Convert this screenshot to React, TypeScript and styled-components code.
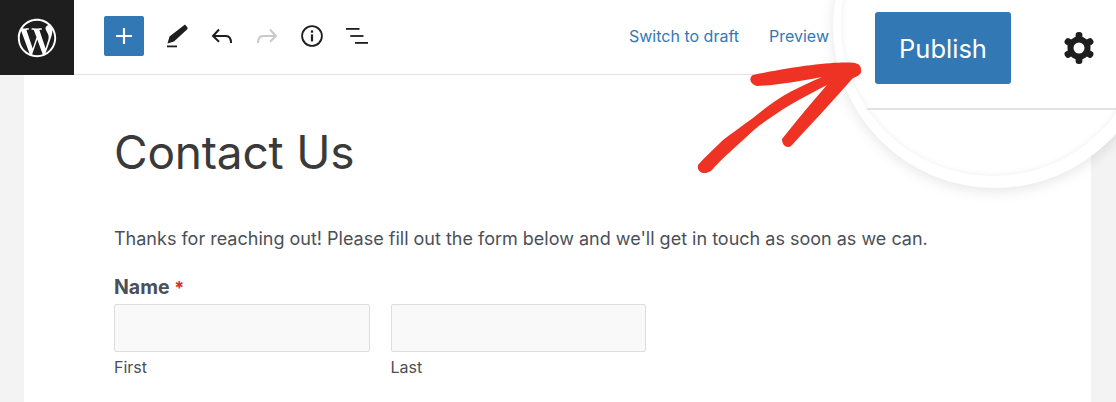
import React from "react";
import styled, { createGlobalStyle } from "styled-components";

const GlobalStyle = createGlobalStyle`
  html, body {
    margin: 0;
    padding: 0;
    background: #ffffff;
  }
  body {
    font-family: Inter, "Liberation Sans", sans-serif;
    overflow: hidden;
  }
`;

const WordPressLogo = () => (
  <svg width="46" height="46" viewBox="0 0 24 24" fill="#ffffff">
    <path d="M12.158 12.786l-2.698 7.84c.806.236 1.657.365 2.54.365 1.047 0 2.051-.181 2.986-.51-.024-.038-.046-.079-.065-.124l-2.763-7.571zM3.009 12c0 3.559 2.068 6.634 5.067 8.092L3.788 8.341C3.289 9.459 3.009 10.696 3.009 12zm15.06-.454c0-1.112-.399-1.881-.741-2.48-.456-.741-.883-1.368-.883-2.109 0-.826.627-1.596 1.51-1.596.04 0 .078.005.116.007C16.472 3.904 14.34 3.009 12 3.009c-3.141 0-5.904 1.612-7.512 4.052.211.007.41.011.579.011.94 0 2.396-.114 2.396-.114.484-.028.541.684.057.741 0 0-.487.057-1.029.085l3.274 9.739 1.968-5.901-1.401-3.838c-.484-.028-.943-.085-.943-.085-.485-.029-.428-.769.057-.741 0 0 1.484.114 2.368.114.94 0 2.397-.114 2.397-.114.485-.028.542.684.057.741 0 0-.488.057-1.029.085l3.249 9.665.897-2.996c.456-1.169.684-2.137.684-2.907zm1.82-3.86c.039.286.06.593.06.924 0 .912-.171 1.938-.684 3.22l-2.746 7.94C19.194 18.229 20.991 15.325 20.991 12c0-1.565-.4-3.038-1.102-4.314zM12 22C6.486 22 2 17.514 2 12S6.486 2 12 2s10 4.486 10 10-4.486 10-10 10z" />
  </svg>
);

const Plus = () => (
  <svg width="32" height="32" viewBox="0 0 24 24" fill="#ffffff">
    <path d="M18 11.2h-5.2V6h-1.6v5.2H6v1.6h5.2V18h1.6v-5.2H18z" />
  </svg>
);

const Pencil = () => (
  <svg width="24" height="24" viewBox="0 0 24 24" fill="#1e1e1e">
    <path d="M20 .5l2.5 3q.6 1-.5 2L9 17.5l-6.5 2 2-7z" />
    <rect x="2" y="21.5" width="10" height="1.8" />
  </svg>
);

const Undo = () => (
  <svg width="24" height="24" viewBox="0 0 24 24" fill="none" stroke="#1e1e1e" strokeWidth="2">
    <path d="M9 5.5L3 12l6 5.8M3.5 12H16c3.5 0 5 2 5 7" />
  </svg>
);

const Redo = () => (
  <svg width="24" height="24" viewBox="0 0 24 24" fill="none" stroke="#c9c9c9" strokeWidth="2">
    <path d="M15 5.5l6 6.5-6 5.8M20.5 12H8c-3.5 0-5 2-5 7" />
  </svg>
);

const Info = () => (
  <svg width="24" height="24" viewBox="0 0 24 24" fill="#1e1e1e">
    <path d="M12 1.2a10.8 10.8 0 1 0 0 21.6 10.8 10.8 0 0 0 0-21.6zm0 19.8a9 9 0 1 1 0-18 9 9 0 0 1 0 18z" />
    <rect x="10.9" y="10.4" width="2.2" height="7" />
    <rect x="10.9" y="6.4" width="2.2" height="2.3" />
  </svg>
);

const ListView = () => (
  <svg width="24" height="24" viewBox="0 0 24 24" fill="#1e1e1e">
    <rect x="1" y="4" width="13.5" height="1.8" />
    <rect x="5.3" y="11.1" width="13.2" height="1.8" />
    <rect x="10" y="18" width="13" height="1.8" />
  </svg>
);

const Gear = () => (
  <svg width="32" height="32" viewBox="0 0 32 32" fill="#1e1e1e">
    <circle cx="16" cy="16" r="8.5" fill="none" stroke="#1e1e1e" strokeWidth="6" />
    {[0, 60, 120, 180, 240, 300].map((angle) => (
      <rect key={angle} x="12.6" y="0" width="6.8" height="8" rx="3" transform={`rotate(${angle} 16 16)`} />
    ))}
  </svg>
);

const Arrow = () => (
  <ArrowSvg viewBox="0 0 180 130" width="180" height="130">
    <path
      fill="#ee3224"
      d="M165 13 C150 11 110 15 63 25 C59 27 59 34 67 36 C90 35 110 31 132 27 C120 32 110 37 100 42 C85 50 73 60 63 68 C52 76 42 83 33 90 C25 98 15 107 8 115 C7 119 9 122 13 123 C16 123.5 19 122 21 121 C27 114 33 108 40 102 C50 93 60 83 70 75 C80 68 90 61 100 55 C112 48 125 41 137 35 C122 52 107 70 92 89 C92 93 94 97 98 97 C100 97 101 96 102 95 C122 73 143 51 163 28 C168 26 172 24 171 20 C171 16 169 14 165 13 Z"
    />
  </ArrowSvg>
);

export default function App() {
  return (
    <Page>
      <GlobalStyle />
      <TopBar>
        <LogoTile>
          <WordPressLogo />
        </LogoTile>
        <Tools>
          <AddButton>
            <Plus />
          </AddButton>
          <ToolIcon>
            <Pencil />
          </ToolIcon>
          <ToolIcon>
            <Undo />
          </ToolIcon>
          <ToolIcon>
            <Redo />
          </ToolIcon>
          <ToolIcon>
            <Info />
          </ToolIcon>
          <ToolIcon>
            <ListView />
          </ToolIcon>
        </Tools>
        <Links>
          <TopLink>Switch to draft</TopLink>
          <TopLink>Preview</TopLink>
        </Links>
      </TopBar>
      <Canvas>
        <Sheet>
          <Title>Contact Us</Title>
          <Intro>
            Thanks for reaching out! Please fill out the form below and we'll get in touch as soon as we can.
          </Intro>
          <FieldLabel>
            Name <Required>*</Required>
          </FieldLabel>
          <NameRow>
            <NameColumn>
              <NameInput />
              <SubLabel>First</SubLabel>
            </NameColumn>
            <NameColumn>
              <NameInput />
              <SubLabel>Last</SubLabel>
            </NameColumn>
          </NameRow>
        </Sheet>
      </Canvas>
      <Magnifier>
        <Lens>
          <MagnifiedBar>
            <PublishButton>Publish</PublishButton>
            <Gear />
          </MagnifiedBar>
        </Lens>
      </Magnifier>
      <Arrow />
    </Page>
  );
}

const Page = styled.div`
  position: relative;
  width: 1116px;
  height: 402px;
  overflow: hidden;
`;

const TopBar = styled.header`
  display: flex;
  align-items: center;
  height: 74px;
  border-bottom: 1px solid #e2e2e2;
  background: #ffffff;
`;

const LogoTile = styled.div`
  display: flex;
  align-items: center;
  justify-content: center;
  width: 74px;
  height: 75px;
  margin-bottom: -1px;
  background: #1e1e1e;
`;

const Tools = styled.div`
  display: flex;
  align-items: center;
  margin-left: 30px;
  margin-bottom: 2px;
`;

const AddButton = styled.div`
  display: flex;
  align-items: center;
  justify-content: center;
  width: 40px;
  height: 40px;
  margin-right: 10px;
  border-radius: 2px;
  background: #3278b5;
`;

const ToolIcon = styled.div`
  display: flex;
  align-items: center;
  justify-content: center;
  width: 45px;
  height: 40px;
`;

const Links = styled.nav`
  display: flex;
  gap: 30px;
  margin-left: auto;
  margin-right: 287px;
  margin-bottom: 2px;
`;

const TopLink = styled.span`
  font-size: 16px;
  color: #3278b5;
`;

const Canvas = styled.main`
  display: flex;
  height: 327px;
  padding: 0 25px 0 24px;
  background: #f3f3f3;
`;

const Sheet = styled.section`
  flex: 1;
  padding: 49px 90px 0;
  background: #ffffff;
  color: #4b4f58;
`;

const Title = styled.h1`
  margin: 0;
  font-size: 46px;
  font-weight: 400;
  line-height: 56px;
  letter-spacing: -0.2px;
  color: #3a3a3a;
`;

const Intro = styled.p`
  margin: 47px 0 0;
  font-size: 18px;
  line-height: 24px;
`;

const FieldLabel = styled.div`
  margin-top: 24px;
  font-size: 19.5px;
  font-weight: 700;
  line-height: 24px;
`;

const Required = styled.span`
  font-size: 18px;
  color: #e3291f;
`;

const NameRow = styled.div`
  display: flex;
  gap: 21px;
  margin-top: 4px;
`;

const NameColumn = styled.div`
  display: flex;
  flex-direction: column;
  width: 255.5px;
`;

const NameInput = styled.div`
  height: 46px;
  border: 1px solid #dedede;
  border-radius: 2px;
  background: #f9f9f9;
`;

const SubLabel = styled.span`
  margin-top: 5px;
  font-size: 16px;
  line-height: 20px;
`;

const Magnifier = styled.div`
  position: absolute;
  left: 833px;
  top: -136px;
  box-sizing: border-box;
  width: 324px;
  height: 324px;
  padding: 8px;
  border-radius: 50%;
  background: #ffffff;
  box-shadow: 0 3px 14px rgba(0, 0, 0, 0.1);
`;

const Lens = styled.div`
  width: 304px;
  height: 304px;
  overflow: hidden;
  border-radius: 50%;
  box-shadow: inset 0 0 6px rgba(0, 0, 0, 0.07);
`;

const MagnifiedBar = styled.div`
  display: flex;
  align-items: center;
  gap: 52px;
  box-sizing: border-box;
  height: 238px;
  padding: 140px 0 24px 34px;
  border-bottom: 2px solid #e2e2e2;
`;

const PublishButton = styled.div`
  display: flex;
  align-items: center;
  justify-content: center;
  flex: none;
  width: 136px;
  height: 72px;
  border-radius: 3px;
  background: #3278b5;
  color: #ffffff;
  font-size: 25.5px;
`;

const ArrowSvg = styled.svg`
  position: absolute;
  left: 690px;
  top: 50px;
`;
